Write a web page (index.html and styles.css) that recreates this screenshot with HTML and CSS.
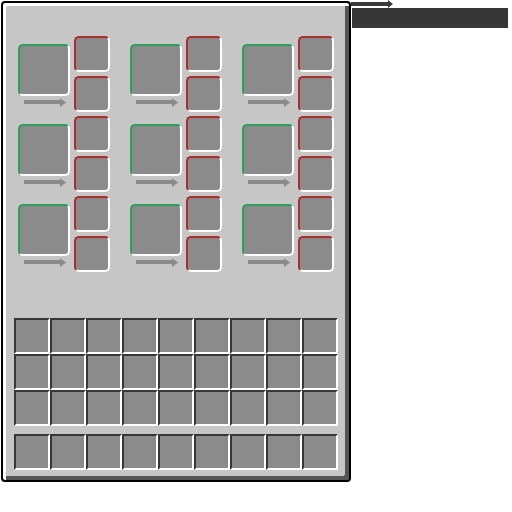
FILE: index.html
```html
<!DOCTYPE html>
<html lang="en">
<head>
    <meta charset="UTF-8">
    <title>Machine</title>
    <link rel="stylesheet" href="styles.css">
</head>
<body>
    <div class="panel">
        <div class="machines">
            <div class="unit">
                <div class="main">
                    <div class="big-slot"></div>
                    <svg class="arrow" viewBox="0 0 42 9" width="42" height="9"><rect x="0" y="2" width="37" height="4" /><polygon points="36,0 42,4.5 36,9" /></svg>
                </div>
                <div class="outputs"><div class="small-slot"></div><div class="small-slot"></div></div>
            </div>
            <div class="unit">
                <div class="main">
                    <div class="big-slot"></div>
                    <svg class="arrow" viewBox="0 0 42 9" width="42" height="9"><rect x="0" y="2" width="37" height="4" /><polygon points="36,0 42,4.5 36,9" /></svg>
                </div>
                <div class="outputs"><div class="small-slot"></div><div class="small-slot"></div></div>
            </div>
            <div class="unit">
                <div class="main">
                    <div class="big-slot"></div>
                    <svg class="arrow" viewBox="0 0 42 9" width="42" height="9"><rect x="0" y="2" width="37" height="4" /><polygon points="36,0 42,4.5 36,9" /></svg>
                </div>
                <div class="outputs"><div class="small-slot"></div><div class="small-slot"></div></div>
            </div>
            <div class="unit">
                <div class="main">
                    <div class="big-slot"></div>
                    <svg class="arrow" viewBox="0 0 42 9" width="42" height="9"><rect x="0" y="2" width="37" height="4" /><polygon points="36,0 42,4.5 36,9" /></svg>
                </div>
                <div class="outputs"><div class="small-slot"></div><div class="small-slot"></div></div>
            </div>
            <div class="unit">
                <div class="main">
                    <div class="big-slot"></div>
                    <svg class="arrow" viewBox="0 0 42 9" width="42" height="9"><rect x="0" y="2" width="37" height="4" /><polygon points="36,0 42,4.5 36,9" /></svg>
                </div>
                <div class="outputs"><div class="small-slot"></div><div class="small-slot"></div></div>
            </div>
            <div class="unit">
                <div class="main">
                    <div class="big-slot"></div>
                    <svg class="arrow" viewBox="0 0 42 9" width="42" height="9"><rect x="0" y="2" width="37" height="4" /><polygon points="36,0 42,4.5 36,9" /></svg>
                </div>
                <div class="outputs"><div class="small-slot"></div><div class="small-slot"></div></div>
            </div>
            <div class="unit">
                <div class="main">
                    <div class="big-slot"></div>
                    <svg class="arrow" viewBox="0 0 42 9" width="42" height="9"><rect x="0" y="2" width="37" height="4" /><polygon points="36,0 42,4.5 36,9" /></svg>
                </div>
                <div class="outputs"><div class="small-slot"></div><div class="small-slot"></div></div>
            </div>
            <div class="unit">
                <div class="main">
                    <div class="big-slot"></div>
                    <svg class="arrow" viewBox="0 0 42 9" width="42" height="9"><rect x="0" y="2" width="37" height="4" /><polygon points="36,0 42,4.5 36,9" /></svg>
                </div>
                <div class="outputs"><div class="small-slot"></div><div class="small-slot"></div></div>
            </div>
            <div class="unit">
                <div class="main">
                    <div class="big-slot"></div>
                    <svg class="arrow" viewBox="0 0 42 9" width="42" height="9"><rect x="0" y="2" width="37" height="4" /><polygon points="36,0 42,4.5 36,9" /></svg>
                </div>
                <div class="outputs"><div class="small-slot"></div><div class="small-slot"></div></div>
            </div>
        </div>

        <div class="inventory" id="inventory"></div>
        <div class="hotbar" id="hotbar"></div>
    </div>

    <svg class="tab-arrow" viewBox="0 0 42 8" width="42" height="8"><rect x="0" y="2" width="38" height="4" /><polygon points="37,0 42,4 37,8" /></svg>
    <div class="tab-bar"></div>

    <script>
        function fillSlots(id, count) {
            const grid = document.getElementById(id);
            for (let i = 0; i < count; i++) {
                const slot = document.createElement('div');
                slot.className = 'slot';
                grid.appendChild(slot);
            }
        }
        fillSlots('inventory', 27);
        fillSlots('hotbar', 9);
    </script>
</body>
</html>
```

FILE: styles.css
```css
* {
    margin: 0;
    padding: 0;
    box-sizing: border-box;
}
body {
    background: #ffffff;
    font-family: 'Liberation Sans', sans-serif;
    position: relative;
    width: 512px;
    height: 512px;
    overflow: hidden;
}
.panel {
    margin: 1px 0 0 1px;
    width: 350px;
    height: 481px;
    background: #c6c6c6;
    border: 2px solid #000000;
    border-radius: 4px;
    box-shadow: inset 3px 3px 0 #ffffff, inset -4px -4px 0 #555555;
    padding: 33px 0 0 11px;
}
.machines {
    display: grid;
    grid-template-columns: repeat(3, 92px);
    column-gap: 20px;
    row-gap: 4px;
    margin-left: 4px;
}
.unit {
    display: flex;
    gap: 4px;
}
.main {
    display: flex;
    flex-direction: column;
    width: 52px;
}
.big-slot {
    margin-top: 8px;
    width: 52px;
    height: 52px;
    background: #8b8b8b;
    border: 2px solid;
    border-color: #2f9e5a #ffffff #ffffff #2f9e5a;
    border-radius: 5px;
}
.arrow {
    display: block;
    margin: 2px 0 0 6px;
    fill: #8b8b8b;
}
.outputs {
    display: flex;
    flex-direction: column;
    gap: 4px;
}
.small-slot {
    width: 36px;
    height: 36px;
    background: #8b8b8b;
    border: 2px solid;
    border-color: #a52f2f #ffffff #ffffff #a52f2f;
    border-radius: 5px;
}
.inventory, .hotbar {
    display: grid;
    grid-template-columns: repeat(9, 36px);
}
.inventory {
    margin-top: 46px;
}
.hotbar {
    margin-top: 8px;
}
.slot {
    width: 36px;
    height: 36px;
    background: #8b8b8b;
    border: 2px solid;
    border-color: #373737 #ffffff #ffffff #373737;
}
.tab-arrow {
    position: absolute;
    left: 351px;
    top: 0;
    fill: #3a3a3a;
}
.tab-bar {
    position: absolute;
    left: 352px;
    top: 8px;
    width: 156px;
    height: 20px;
    background: #373737;
}
```
